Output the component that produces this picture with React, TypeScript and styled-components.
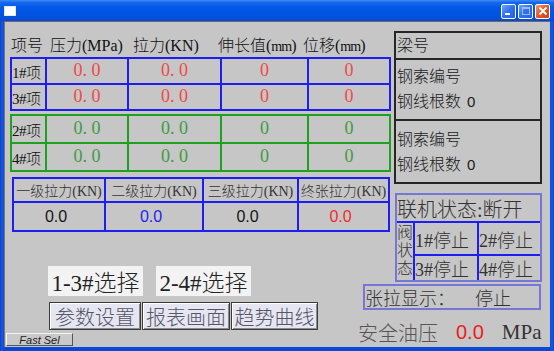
import React from 'react';
import styled, { createGlobalStyle } from 'styled-components';

const SERIF = `"Liberation Serif", "Noto Sans CJK SC", serif`;
const SANS = `"Liberation Sans", "Noto Sans CJK SC", sans-serif`;
const FACE = '#c6c6c6';

const GlobalStyle = createGlobalStyle`
  html, body { margin: 0; padding: 0; background: #ffffff; }
  body { width: 554px; height: 351px; overflow: hidden; }
`;

const cylinders = [
  { group: 'blue', rows: ['1#项', '3#项'] },
  { group: 'green', rows: ['2#项', '4#项'] },
];

const stages = [
  { name: '一级拉力(KN)', color: '#151515' },
  { name: '二级拉力(KN)', color: '#2424f0' },
  { name: '三级拉力(KN)', color: '#151515' },
  { name: '终张拉力(KN)', color: '#f42a2a' },
];

export default function App() {
  return (
    <>
      <GlobalStyle />
      <Window>
        <TitleBar>
          <AppIcon />
          <Controls>
            <CtrlButton>
              <MinGlyph />
            </CtrlButton>
            <CtrlButton>
              <MaxGlyph />
            </CtrlButton>
            <CloseButton>
              <svg width="10" height="10" viewBox="0 0 10 10">
                <path d="M1.5 1.5 L8.5 8.5 M8.5 1.5 L1.5 8.5" stroke="#fff" strokeWidth="1.8" />
              </svg>
            </CloseButton>
          </Controls>
        </TitleBar>

        <Client>
          <LeftColumn>
            <HeaderRow>
              <HeadLabel $w={39}>项号</HeadLabel>
              <HeadLabel $w={83}>压力(MPa)</HeadLabel>
              <HeadLabel $w={85}>拉力(KN)</HeadLabel>
              <HeadLabel $w={85}>
                伸长值(<Mm>mm</Mm>)
              </HeadLabel>
              <HeadLabel>
                位移(<Mm>mm</Mm>)
              </HeadLabel>
            </HeaderRow>

            {cylinders.map((c) => {
              const blue = c.group === 'blue';
              const tone = blue ? '#f24848' : '#3f9c3f';
              return (
                <CylTable key={c.group} $line={blue ? '#1e1ef2' : '#20a020'} $row={blue ? 24 : 26} $gapTop={blue ? 0 : 3}>
                  {c.rows.map((r) => (
                    <React.Fragment key={r}>
                      <RowLabel>{r}</RowLabel>
                      <Reading $color={tone}>0. 0</Reading>
                      <Reading $color={tone}>0. 0</Reading>
                      <Reading $color={tone}>0</Reading>
                      <Reading $color={tone}>0</Reading>
                    </React.Fragment>
                  ))}
                </CylTable>
              );
            })}

            <StageTable>
              {stages.map((s) => (
                <StageHead key={s.name}>{s.name}</StageHead>
              ))}
              {stages.map((s) => (
                <StageValue key={s.name} $color={s.color}>0.0</StageValue>
              ))}
            </StageTable>

            <SelectRow>
              <SelectButton>1-3#选择</SelectButton>
              <SelectButton>2-4#选择</SelectButton>
            </SelectRow>

            <NavRow>
              <NavButton $w={92}>参数设置</NavButton>
              <NavButton $w={88}>报表画面</NavButton>
              <NavButton $w={87}>趋势曲线</NavButton>
            </NavRow>

            <FastTab>Fast Sel</FastTab>
          </LeftColumn>

          <RightColumn>
            <InfoPanel>
              <InfoSection $h={25}>
                <InfoLine>梁号</InfoLine>
              </InfoSection>
              <InfoSection $h={55} $padTop={4}>
                <InfoLine>钢索编号</InfoLine>
                <InfoLine>
                  钢线根数 <Count>0</Count>
                </InfoLine>
              </InfoSection>
              <InfoSection $h={55} $padTop={6} $last>
                <InfoLine>钢索编号</InfoLine>
                <InfoLine>
                  钢线根数 <Count>0</Count>
                </InfoLine>
              </InfoSection>
            </InfoPanel>

            <StatusPanel>
              <LinkState>联机状态:断开</LinkState>
              <ValveGrid>
                <ValveLabel>阀状态</ValveLabel>
                <ValveCell>1#停止</ValveCell>
                <ValveCell>2#停止</ValveCell>
                <ValveCell>3#停止</ValveCell>
                <ValveCell>4#停止</ValveCell>
              </ValveGrid>
            </StatusPanel>

            <TensionBox>
              张拉显示：<TensionState>停止</TensionState>
            </TensionBox>

            <OilRow>
              <OilLabel>安全油压</OilLabel>
              <OilValue>0.0</OilValue>
              <OilUnit>MPa</OilUnit>
            </OilRow>
          </RightColumn>
        </Client>
      </Window>
    </>
  );
}

const Window = styled.div`
  width: 554px;
  height: 351px;
  display: flex;
  flex-direction: column;
  font-weight: 300;
  background: linear-gradient(90deg, #0a3fc8 0px, #1c5ae0 2px, #0b48d6 4px, #0b48d6 550px, #1c5ae0 552px, #0a3fc8 554px);
`;

const TitleBar = styled.div`
  height: 21px;
  flex: none;
  display: flex;
  align-items: center;
  justify-content: space-between;
  padding: 0 4px 0 4px;
  background: linear-gradient(#3f8cf3 0%, #1567ee 12%, #0558e6 35%, #0054e3 60%, #0451dd 85%, #0a47c8 100%);
`;

const AppIcon = styled.div`
  width: 10px;
  height: 8px;
  margin-top: 1px;
  background: #ffffff;
  border: 1px solid #dfe8ff;
`;

const Controls = styled.div`
  display: flex;
  gap: 2px;
  margin-top: 1px;
`;

const CtrlButton = styled.div`
  width: 13px;
  height: 13px;
  border: 1px solid #ffffff;
  border-radius: 2px;
  background: linear-gradient(135deg, #6fa4ff 0%, #2f6ff0 50%, #2560e8 100%);
  position: relative;
  display: flex;
  align-items: center;
  justify-content: center;
`;

const MinGlyph = styled.div`
  position: absolute;
  left: 3px;
  bottom: 3px;
  width: 5px;
  height: 2px;
  background: #ffffff;
`;

const MaxGlyph = styled.div`
  width: 6px;
  height: 5px;
  border: 1px solid #9dbdf6;
  border-top-width: 2px;
`;

const CloseButton = styled(CtrlButton)`
  background: linear-gradient(135deg, #f49a6c 0%, #e2582a 50%, #cc4318 100%);
`;

const Client = styled.div`
  flex: 1;
  margin: 0 4px 4px 4px;
  background: ${FACE};
  border-top: 1px solid #6a6a6a;
  border-left: 1px solid #777777;
  display: flex;
  padding-left: 1px;
  min-height: 0;
`;

const LeftColumn = styled.div`
  width: 388px;
  flex: none;
  display: flex;
  flex-direction: column;
  padding-top: 9px;
`;

const HeaderRow = styled.div`
  height: 26px;
  display: flex;
  align-items: center;
  margin-left: 5px;
  font: 300 16px ${SERIF};
  color: #111111;
`;

const HeadLabel = styled.span<{ $w?: number }>`
  width: ${(p) => (p.$w ? `${p.$w}px` : 'auto')};
  flex: none;
  white-space: nowrap;
`;

const Mm = styled.span`
  font-size: 14px;
  letter-spacing: -1px;
`;

const CylTable = styled.div<{ $line: string; $row: number; $gapTop: number }>`
  display: grid;
  grid-template-columns: 33px 80px 91px 85px 80px;
  grid-auto-rows: ${(p) => p.$row}px;
  gap: 2px;
  padding: 2px;
  margin: ${(p) => p.$gapTop}px 0 0 4px;
  width: max-content;
  background: ${(p) => p.$line};
`;

const Cell = styled.div`
  background: ${FACE};
  display: flex;
  align-items: center;
  justify-content: center;
  white-space: nowrap;
`;

const RowLabel = styled(Cell)`
  justify-content: flex-start;
  font: 300 15px ${SERIF};
  color: #111111;
  letter-spacing: -0.5px;
`;

const Reading = styled(Cell)<{ $color: string }>`
  font: 18px ${SERIF};
  color: ${(p) => p.$color};
  padding-bottom: 1px;
`;

const StageTable = styled.div`
  display: grid;
  grid-template-columns: 90px 96px 93px 89px;
  grid-template-rows: 22px 27px;
  gap: 2px;
  padding: 2px;
  margin: 5px 0 0 6px;
  width: max-content;
  background: #1e1ef2;
`;

const StageHead = styled(Cell)`
  font: 300 14px ${SERIF};
  color: #333333;
`;

const StageValue = styled(Cell)<{ $color: string }>`
  font: 16px ${SANS};
  color: ${(p) => p.$color};
  padding-right: 6px;
`;

const SelectRow = styled.div`
  display: flex;
  gap: 13px;
  margin: 34px 0 0 42px;
`;

const SelectButton = styled.div`
  width: 95px;
  height: 30px;
  background: #f3f3f3;
  display: flex;
  align-items: center;
  justify-content: center;
  font: 300 23px ${SERIF};
  color: #222222;
  white-space: nowrap;
`;

const NavRow = styled.div`
  display: flex;
  gap: 1px;
  margin: 6px 0 0 43px;
`;

const NavButton = styled.div<{ $w: number }>`
  width: ${(p) => p.$w}px;
  height: 28px;
  box-sizing: border-box;
  border: 1px solid #3c3c3c;
  box-shadow: inset 1px 1px 0 #ffffff, inset -1px -1px 0 #8a8a8a;
  background: #e6e6f2;
  display: flex;
  align-items: center;
  justify-content: center;
  font: 300 20px ${SERIF};
  color: #555566;
  white-space: nowrap;
`;

const FastTab = styled.div`
  width: 67px;
  height: 13px;
  margin-top: 3px;
  box-sizing: border-box;
  border-top: 1px solid #f4f4f4;
  border-left: 1px solid #f4f4f4;
  border-right: 1px solid #555555;
  border-bottom: 1px solid #555555;
  background: #c9c9c9;
  display: flex;
  align-items: center;
  justify-content: center;
  font: italic 11px ${SANS};
  color: #222222;
`;

const RightColumn = styled.div`
  width: 148px;
  flex: none;
  display: flex;
  flex-direction: column;
  padding-top: 9px;
`;

const InfoPanel = styled.div`
  border: 2px solid #262626;
  display: flex;
  flex-direction: column;
`;

const InfoSection = styled.div<{ $h: number; $padTop?: number; $last?: boolean }>`
  height: ${(p) => p.$h}px;
  padding-top: ${(p) => p.$padTop ?? 0}px;
  border-bottom: ${(p) => (p.$last ? 'none' : '2px solid #262626')};
  display: flex;
  flex-direction: column;
  justify-content: ${(p) => (p.$padTop ? 'flex-start' : 'center')};
`;

const InfoLine = styled.div`
  height: 25px;
  padding-left: 1px;
  font: 300 16px ${SERIF};
  line-height: 25px;
  color: #1a1a1a;
  white-space: nowrap;
`;

const Count = styled.span`
  font: 15px ${SANS};
  margin-left: 2px;
`;

const StatusPanel = styled.div`
  margin: 9px 0 0 1px;
  border: 2px solid #7676d6;
  display: flex;
  flex-direction: column;
`;

const LinkState = styled.div`
  height: 26px;
  display: flex;
  align-items: center;
  font: 300 20px ${SERIF};
  color: #333333;
  white-space: nowrap;
`;

const ValveGrid = styled.div`
  display: grid;
  grid-template-columns: 16px 62px 61px;
  grid-template-rows: 31px 24px;
  gap: 2px;
  padding-top: 2px;
  background: #1e1ef2;
`;

const ValveLabel = styled.div`
  grid-row: 1 / span 2;
  background: ${FACE};
  font: 300 16px ${SERIF};
  line-height: 18px;
  color: #333333;
  padding-top: 1px;
  word-break: break-all;
`;

const ValveCell = styled.div`
  background: ${FACE};
  display: flex;
  align-items: center;
  font: 300 18px ${SERIF};
  color: #333333;
  white-space: nowrap;
`;

const TensionBox = styled.div`
  margin: 2px 0 0 -31px;
  width: 178px;
  height: 26px;
  box-sizing: border-box;
  border: 2px solid #7676d6;
  display: flex;
  align-items: center;
  font: 300 18px ${SERIF};
  color: #333333;
  white-space: nowrap;
`;

const TensionState = styled.span`
  margin-left: 20px;
`;

const OilRow = styled.div`
  margin: 10px 0 0 -36px;
  height: 24px;
  display: flex;
  align-items: center;
  white-space: nowrap;
`;

const OilLabel = styled.span`
  font: 300 20px ${SERIF};
  color: #555555;
`;

const OilValue = styled.span`
  margin-left: 18px;
  font: 20px ${SANS};
  color: #ee1c1c;
`;

const OilUnit = styled.span`
  margin-left: 18px;
  font: 21px ${SERIF};
  color: #333333;
`;
